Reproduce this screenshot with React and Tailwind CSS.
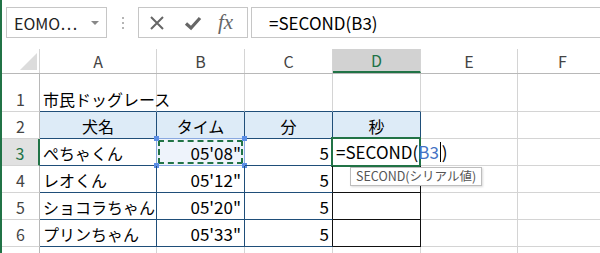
import React from 'react'

const FONT = { fontFamily: '"Noto Sans CJK JP", "Noto Sans", sans-serif' }
const COLS = ['A', 'B', 'C', 'D', 'E', 'F']
const BLUE = 'border-[#1f4e79]'

const rows = [
  { n: 1, h: 'h-[38px]', cells: [{ t: '市民ドッグレース', b: 'border-b-[#1f4e79]' }, { b: 'border-b-[#1f4e79]' }, { b: 'border-b-[#1f4e79]' }, { b: 'border-b-[#1f4e79]' }, {}, {}] },
  {
    n: 2,
    h: 'h-[27px]',
    cells: [
      { t: '犬名', head: true },
      { t: 'タイム', head: true },
      { t: '分', head: true },
      { t: '秒', head: true },
      {},
      {},
    ],
  },
  { n: 3, h: 'h-[27px]', active: true, cells: [{ t: 'ぺちゃくん', tb: true }, { t: '05\'08"', r: true, tb: true, sel: true }, { t: '5', r: true, tb: true }, { tb: true, edit: true }, {}, {}] },
  { n: 4, h: 'h-[27px]', cells: [{ t: 'レオくん', tb: true }, { t: '05\'12"', r: true, tb: true }, { t: '5', r: true, tb: true, blk: true }, { tb: true, d: true }, {}, {}] },
  { n: 5, h: 'h-[27px]', cells: [{ t: 'ショコラちゃん', tb: true }, { t: '05\'20"', r: true, tb: true }, { t: '5', r: true, tb: true, blk: true }, { tb: true, d: true }, {}, {}] },
  { n: 6, h: 'h-[27px]', cells: [{ t: 'プリンちゃん', tb: true }, { t: '05\'33"', r: true, tb: true }, { t: '5', r: true, tb: true, blk: true }, { tb: true, d: true }, {}, {}] },
  { n: '', h: 'h-[27px]', cells: [{}, {}, {}, {}, {}, {}] },
]

const widths = ['w-[117px]', 'w-[88px]', 'w-[88px]', 'w-[88px]', 'w-[97px]', 'w-[90px]']

function Cell({ c, w }) {
  let border = 'border-r border-b border-[#d4d4d4]'
  if (c.head || c.tb) border = `border-r border-b ${BLUE}`
  if (c.blk) border = `border-r border-b border-r-[#111] border-b-[#1f4e79]`
  if (c.d) border = 'border-r border-b border-[#111]'
  if (c.b) border = `border-r border-b border-r-[#d4d4d4] ${c.b}`
  const bg = c.head ? 'bg-[#ddebf7]' : c.sel ? 'bg-[#eef3fb]' : ''
  const align = c.head ? 'justify-center' : c.r ? 'justify-end pr-[3px]' : 'justify-start pl-[3px]'
  return (
    <div className={`relative shrink-0 h-full flex items-end pb-[1px] ${w} ${border} ${bg} ${align}`}>
      {c.t ? (
        <span className={`whitespace-nowrap leading-[22px] text-black ${c.r ? 'text-[17px]' : 'text-[16px]'}`}>{c.t}</span>
      ) : null}
      {c.sel ? (
        <>
          <div className="absolute -left-[1px] -top-[1px] w-[89px] h-[28px] border border-[#8aa9e0]" />
          <div className="absolute left-[1px] top-[1px] right-[1px] bottom-[1px] border-2 border-dashed border-[#217346]" />
          <div className="absolute -left-[3px] -top-[3px] w-[5px] h-[5px] bg-[#5b8ee6]" />
          <div className="absolute -right-[3px] -top-[3px] w-[5px] h-[5px] bg-[#5b8ee6]" />
          <div className="absolute -left-[3px] -bottom-[3px] w-[5px] h-[5px] bg-[#5b8ee6]" />
          <div className="absolute -right-[3px] -bottom-[3px] w-[5px] h-[5px] bg-[#5b8ee6]" />
        </>
      ) : null}
      {c.edit ? (
        <>
          <div className="absolute -left-[2px] -top-[2px] w-[90px] h-[30px] border-2 border-[#217346]" />
          <div className="absolute left-[3px] top-0 h-full flex items-center whitespace-nowrap text-[17px] leading-[22px] z-10">
            <span className="text-black">=SECOND(</span>
            <span className="text-[#4472c4]">B3</span>
            <span className="inline-block w-[1px] h-[20px] bg-black mx-[1px]" />
            <span className="text-black">)</span>
          </div>
          <div className="absolute left-[17px] top-[28px] h-[19px] bg-white border border-[#bdbdbd] shadow-[1px_1px_2px_rgba(0,0,0,0.15)] flex items-center px-[5px] z-20 whitespace-nowrap text-[12.5px] text-[#555]">
            SECOND(シリアル値)
          </div>
        </>
      ) : null}
    </div>
  )
}

export default function App() {
  return (
    <div className="w-[600px] h-[253px] overflow-hidden bg-white flex" style={FONT}>
      <div className="w-[2px] h-full bg-[#217346] shrink-0" />
      <div className="flex-1 flex flex-col min-w-0">
        {/* formula bar */}
        <div className="h-[49px] shrink-0 flex items-start pt-[7px]">
          <div className="ml-[4px] w-[101px] h-[31px] border border-[#c6c6c6] flex items-center justify-between pl-[7px] pr-[7px]">
            <span className="text-[16px] text-[#222]">EOMO…</span>
            <span className="w-0 h-0 border-l-[4px] border-r-[4px] border-t-[4px] border-l-transparent border-r-transparent border-t-[#888]" />
          </div>
          <div className="w-[31px] h-[31px] flex flex-col items-center justify-center gap-[3px]">
            <span className="w-[2px] h-[2px] bg-[#b5b5b5]" />
            <span className="w-[2px] h-[2px] bg-[#b5b5b5]" />
            <span className="w-[2px] h-[2px] bg-[#b5b5b5]" />
          </div>
          <div className="w-[110px] h-[31px] border border-[#c6c6c6] flex items-center pl-[10px]">
            <svg width="16" height="16" viewBox="0 0 16 16" className="mr-[19px]">
              <path d="M2 2 L14 14 M14 2 L2 14" stroke="#666" strokeWidth="2" />
            </svg>
            <svg width="18" height="16" viewBox="0 0 18 16" className="mr-[16px]">
              <path d="M2 8.5 L7 13 L16 3" stroke="#666" strokeWidth="3.2" fill="none" />
            </svg>
            <span className="text-[21px] italic text-[#666] leading-none" style={{ fontFamily: '"Liberation Serif", serif' }}>
              fx
            </span>
          </div>
          <div className="ml-[3px] flex-1 h-[31px] border-t border-b border-l border-[#c6c6c6] flex items-center pl-[17px]">
            <span className="text-[17px] text-black">=SECOND(B3)</span>
          </div>
        </div>

        {/* column headers */}
        <div className="h-[25px] shrink-0 flex border-b border-[#b8b8b8]">
          <div className="relative w-[38px] shrink-0 h-full border-r border-[#d4d4d4]">
            <svg className="absolute left-[18px] top-[4px]" width="17" height="17" viewBox="0 0 17 17">
              <path d="M17 0 L17 17 L0 17 Z" fill="#dcdcdc" />
            </svg>
          </div>
          {COLS.map((l, i) => (
            <div
              key={l}
              className={`shrink-0 h-full flex items-center justify-center text-[16px] border-r border-[#d4d4d4] ${widths[i]} ${
                l === 'D' ? 'bg-[#d2d2d2] text-[#217346] border-b-2 border-b-[#217346]' : 'text-[#444]'
              }`}
            >
              {l}
            </div>
          ))}
        </div>

        {/* rows */}
        {rows.map((row, idx) => (
          <div key={idx} className={`flex shrink-0 ${row.h}`}>
            <div
              className={`w-[38px] shrink-0 h-full flex items-end justify-center pb-[1px] text-[16px] leading-[22px] border-b border-[#d4d4d4] ${
                row.active
                  ? 'bg-[#e1e1e1] text-[#217346] border-r-2 border-r-[#217346]'
                  : 'text-[#444] border-r border-r-[#b8b8b8]'
              }`}
            >
              {row.n}
            </div>
            {row.cells.map((c, i) => (
              <Cell key={i} c={c} w={widths[i]} />
            ))}
          </div>
        ))}
      </div>
    </div>
  )
}
